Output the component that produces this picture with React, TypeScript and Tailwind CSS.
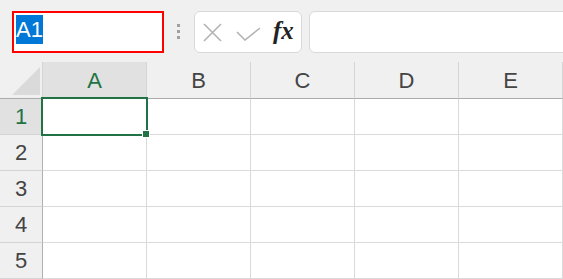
import React from 'react'

const COLUMNS = ['A', 'B', 'C', 'D', 'E']
const ROWS = [1, 2, 3, 4, 5]

const FormulaButtons: React.FC = () => {
  return (
    <div className="relative ml-[14px] h-[42px] w-[108px] shrink-0 rounded-[6px] border border-[#d9d9d9] bg-white">
      <svg className="absolute left-[8px] top-[11px]" width="19" height="19" viewBox="0 0 19 19">
        <path d="M1 1 L18 18 M18 1 L1 18" stroke="#b3b3b3" strokeWidth="1.6" fill="none" />
      </svg>
      <svg className="absolute left-[41px] top-[15px]" width="25" height="14" viewBox="0 0 25 14">
        <path d="M1 5 L9 13 L24 1" stroke="#b3b3b3" strokeWidth="1.6" fill="none" />
      </svg>
      <span
        className="absolute left-[78px] top-[5px] text-[25px] font-bold italic leading-[28px] text-[#222]"
        style={{ fontFamily: '"Liberation Serif", serif' }}
      >
        fx
      </span>
    </div>
  )
}

const Toolbar: React.FC = () => {
  return (
    <div className="flex h-[62px] items-start bg-[#f0f0f0] pt-[11px]">
      <div className="ml-[12px] h-[42px] w-[152px] shrink-0 border-2 border-[#ff0000] bg-white pl-[2px] pt-[2px]">
        <span className="inline-block h-[29px] bg-[#0078d7] text-[22px] leading-[29px] text-white">A1</span>
      </div>
      <div className="ml-[13px] mt-[13px] flex w-[4px] flex-col gap-[3px]">
        <span className="h-[3px] w-[3px] bg-[#a0a0a0]" />
        <span className="h-[3px] w-[3px] bg-[#a0a0a0]" />
        <span className="h-[3px] w-[3px] bg-[#a0a0a0]" />
      </div>
      <FormulaButtons />
      <div className="ml-[7px] h-[42px] w-[300px] shrink-0 rounded-[6px] border border-[#d9d9d9] bg-white" />
    </div>
  )
}

const Sheet: React.FC = () => {
  return (
    <div className="relative grid grid-cols-[43px_repeat(5,104px)] grid-rows-[37px_repeat(5,36px)]">
      {/* corner */}
      <div className="relative border-b border-r border-b-[#ababab] border-r-[#d4d4d4] bg-[#f0f0f0]">
        <svg className="absolute left-[12px] top-[5px]" width="28" height="28" viewBox="0 0 28 28">
          <polygon points="28,0 28,28 0,28" fill="#dadada" />
        </svg>
      </div>
      {COLUMNS.map((c, i) => (
        <div
          key={c}
          className={
            i === 0
              ? 'flex items-center justify-center border-b border-r border-b-[#ababab] border-r-[#d4d4d4] bg-[#e1e1e1] text-[22px] text-[#217346]'
              : 'flex items-center justify-center border-b border-r border-b-[#ababab] border-r-[#d4d4d4] bg-[#f0f0f0] text-[22px] text-[#444]'
          }
        >
          {c}
        </div>
      ))}
      {ROWS.map((r) => (
        <React.Fragment key={r}>
          <div
            className={
              r === 1
                ? 'flex items-center justify-center border-b border-r border-b-[#d4d4d4] border-r-[#b0b0b0] bg-[#e1e1e1] text-[22px] text-[#217346]'
                : 'flex items-center justify-center border-b border-r border-b-[#d4d4d4] border-r-[#b0b0b0] bg-[#f0f0f0] text-[22px] text-[#444]'
            }
          >
            {r}
          </div>
          {COLUMNS.map((c) => (
            <div key={c} className="border-b border-r border-[#dadada] bg-white" />
          ))}
        </React.Fragment>
      ))}
      {/* active cell */}
      <div className="absolute left-[41px] top-[35px] h-[39px] w-[107px] border-2 border-[#217346]" />
      <div className="absolute left-[142px] top-[68px] h-[8px] w-[8px] border border-white bg-[#217346]" />
    </div>
  )
}

export default function App() {
  return (
    <div
      className="h-[279px] w-[563px] overflow-hidden bg-white"
      style={{ fontFamily: '"Liberation Sans", Arial, sans-serif' }}
    >
      <Toolbar />
      <Sheet />
    </div>
  )
}
